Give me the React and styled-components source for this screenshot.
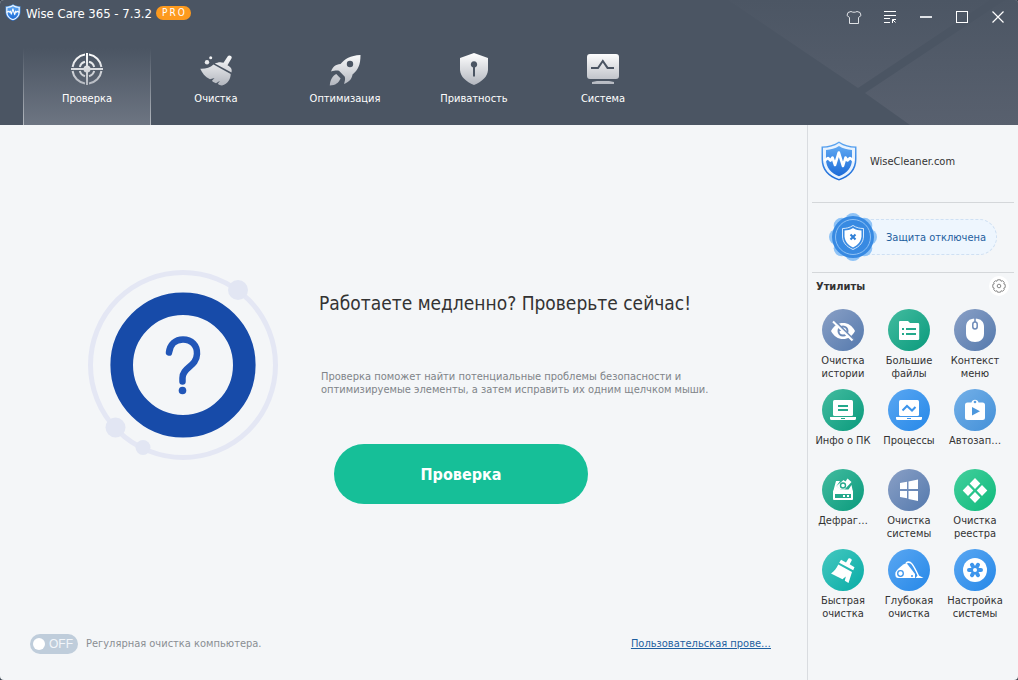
import React from "react";
import styled, { createGlobalStyle, css } from "styled-components";

const FONT = `"DejaVu Sans Condensed", "Noto Sans", sans-serif`;

const GlobalStyle = createGlobalStyle`
  *, *::before, *::after { box-sizing: border-box; }
  body { margin: 0; background: #3a4450; font-family: ${FONT}; font-size: 11px; color: #333; }
  button { font-family: inherit; border: 0; padding: 0; background: none; color: inherit; cursor: pointer; }
  h1, h2, p, ul { margin: 0; padding: 0; }
  ul { list-style: none; }
  svg { display: block; }
`;

const Window = styled.div`
  display: flex;
  flex-direction: column;
  min-height: 100vh;
  background: #f4f6f8;
  border-radius: 4px;
  overflow: hidden;
`;

const Header = styled.header`
  position: relative;
  display: flex;
  flex-direction: column;
  background: #4b5563;
  color: #fff;
`;

const Backdrop = styled.svg`
  position: absolute;
  top: 0;
  right: 0;
`;

const TitleBar = styled.div`
  position: relative;
  display: flex;
  align-items: flex-start;
  height: 48px;
  padding: 4px 12px 0 5px;
`;

const AppTitle = styled.h1`
  font-size: 13px;
  font-weight: 400;
  line-height: 20px;
  margin-left: 5px;
`;

const ProBadge = styled.span`
  height: 14px;
  margin: 2px 0 0 4px;
  padding: 0 4px 0 6px;
  border-radius: 7px;
  background: #fd9a1e;
  font-size: 10px;
  line-height: 14px;
  letter-spacing: 2px;
`;

const WindowControls = styled.div`
  display: flex;
  margin-left: auto;
  gap: 20px;
  padding-top: 5px;
`;

const ControlButton = styled.button`
  width: 16px;
  height: 16px;
`;

const Nav = styled.nav`
  position: relative;
  display: flex;
  gap: 1px;
  padding-left: 23px;
`;

const NavButton = styled.button`
  display: flex;
  flex-direction: column;
  align-items: center;
  width: 128px;
  height: 77px;
  padding-top: 3px;
  font-size: 11px;
  line-height: 16px;
  ${(p) =>
    p.$active &&
    css`
      background:
        linear-gradient(#4b5563, #b4b9c0) left / 1px 100% no-repeat,
        linear-gradient(#4b5563, #b4b9c0) right / 1px 100% no-repeat,
        linear-gradient(#4b5563, #6d7582);
    `}
`;

const NavLabel = styled.span`
  margin-top: 4px;
`;

const Body = styled.div`
  display: flex;
  flex: 1;
`;

const Main = styled.main`
  display: flex;
  flex-direction: column;
  flex: 1;
  min-width: 0;
`;

const Hero = styled.section`
  display: flex;
  flex: 1;
  gap: 41px;
  padding: 145px 20px 40px 88px;
`;

const HeroArt = styled.svg`
  flex: none;
`;

const Copy = styled.div`
  padding-top: 20px;
`;

const Headline = styled.h2`
  font-size: 19px;
  font-weight: 400;
  line-height: 26px;
  color: #333;
`;

const Description = styled.p`
  max-width: 400px;
  margin: 54px 0 0 2px;
  font-size: 11px;
  line-height: 13px;
  color: #808489;
`;

const ScanButton = styled.button`
  width: 254px;
  height: 60px;
  margin: 48px 0 0 15px;
  border-radius: 30px;
  background: #16bf98;
  color: #fff;
  font-size: 16px;
  font-weight: 700;
`;

const Footer = styled.footer`
  display: flex;
  align-items: center;
  justify-content: space-between;
  padding: 0 36px 26px 30px;
`;

const SwitchLabel = styled.label`
  display: flex;
  align-items: center;
  gap: 8px;
  line-height: 20px;
  color: #8a8e93;
  cursor: pointer;
`;

const SwitchInput = styled.input`
  position: absolute;
  opacity: 0;
  pointer-events: none;
`;

const SwitchTrack = styled.span`
  display: flex;
  align-items: center;
  gap: 4px;
  width: 48px;
  height: 20px;
  padding-left: 3px;
  border-radius: 10px;
  background: #bfcddb;
  color: #f2f6fa;
  font-family: "Liberation Sans", sans-serif;
  font-size: 12px;
  &::before {
    content: "";
    width: 12px;
    height: 12px;
    border-radius: 50%;
    background: #fff;
  }
`;

const FooterLink = styled.a`
  color: #1d5fa0;
  line-height: 20px;
`;

const Sidebar = styled.aside`
  width: 211px;
  flex: none;
  border-left: 1px solid #d9dce0;
`;

const Brand = styled.div`
  display: flex;
  align-items: center;
  gap: 13px;
  height: 78px;
  margin: 0 4px;
  padding: 0 0 5px 9px;
  border-bottom: 1px solid #d4d7da;
`;

const Protection = styled.div`
  display: flex;
  align-items: center;
  height: 70px;
  margin: 0 4px;
  padding: 0 0 1px 17px;
  border-bottom: 1px solid #d4d7da;
`;

const ProtectionButton = styled.button`
  display: flex;
  align-items: center;
  color: #1f5f9e;
  font-size: 11px;
`;

const ProtectionText = styled.span`
  height: 36px;
  margin-left: -24px;
  padding: 0 10px 0 32px;
  border: 1px dashed #cfe0f3;
  border-radius: 18px;
  background: #eef6fe;
  line-height: 35px;
`;

const SealArt = styled.svg`
  position: relative;
  z-index: 1;
`;

const UtilitiesHead = styled.div`
  display: flex;
  align-items: center;
  justify-content: space-between;
  height: 26px;
  padding: 0 9px 0 8px;
`;

const UtilitiesTitle = styled.h2`
  font-size: 11px;
  font-weight: 700;
  color: #333;
`;

const SettingsButton = styled.button`
  display: grid;
  place-items: center;
  width: 20px;
  height: 20px;
  border-radius: 50%;
  background: #fff;
`;

const ToolGrid = styled.ul`
  display: grid;
  grid-template-columns: repeat(3, 66px);
  grid-auto-rows: 80px;
  padding: 10px 0 0 2px;
`;

const ToolButton = styled.button`
  display: flex;
  flex-direction: column;
  align-items: center;
  width: 66px;
  font-size: 11px;
  line-height: 13px;
  color: #333;
`;

const ToolDisc = styled.span`
  width: 42px;
  height: 42px;
  margin-bottom: 3px;
  border-radius: 50%;
  background: linear-gradient(135deg, ${(p) => p.$from}, ${(p) => p.$to});
`;

const ToolLabel = styled.span`
  white-space: pre-line;
  text-align: center;
`;

const BrandShield = ({ width, height, id }) => (
  <svg width={width} height={height} viewBox="0 0 36 40" aria-hidden="true">
    <defs>
      <linearGradient id={id} x1="0" y1="0" x2="0" y2="1">
        <stop offset="0" stopColor="#5fa8f2" />
        <stop offset="1" stopColor="#1c6bd8" />
      </linearGradient>
    </defs>
    <path d="M18 .5C13 4 7 5.500 .5 5.500V18C.5 29 7 36 18 39.500 29 36 35.500 29 35.500 18V5.500C29 5.500 23 4 18 .5Z" fill={`url(#${id})`} />
    <path d="M18 2C13 5.500 8 6.500 2 6.800V18C2 28 8 34.500 18 38 28 34.500 34 28 34 18V6.800C28 6.500 23 5.500 18 2Z" fill="#e9f3fe" />
    <path d="M18 5C14 7.500 10 8.700 5 9V18C5 27 10 32 18 35.300 26 32 31 27 31 18V9C26 8.700 22 7.500 18 5Z" fill={`url(#${id})`} />
    <path d="M3 20L7 17 9.500 19.500 11.500 16.500 14 24 17.800 11.500 22 25 24.500 16.500 26.500 19.500 29 17 33 20" fill="none" stroke="#fff" strokeWidth="2.600" strokeLinejoin="round" />
  </svg>
);

const NavSvg = ({ id, children }) => (
  <svg width="36" height="36" viewBox="0 0 36 36" aria-hidden="true" fill={`url(#${id})`}>
    <defs>
      <linearGradient id={id} gradientUnits="userSpaceOnUse" x1="0" y1="2" x2="0" y2="34">
        <stop offset="0" stopColor="#fff" />
        <stop offset="1" stopColor="#b3b7bf" />
      </linearGradient>
    </defs>
    {children}
  </svg>
);

const navItems = [
  {
    label: "Проверка",
    icon: (
      <NavSvg id="nav-scan">
        <g fill="none" stroke="url(#nav-scan)" strokeWidth="2">
          <path d="M16 3.600A14.500 14.500 0 0 0 3.600 16M3.600 20A14.500 14.500 0 0 0 16 32.400M20 32.400A14.500 14.500 0 0 0 32.400 20M32.400 16A14.500 14.500 0 0 0 20 3.600" />
          <path d="M16 10.800A7.500 7.500 0 0 0 10.800 16M10.800 20A7.500 7.500 0 0 0 16 25.200M20 25.200A7.500 7.500 0 0 0 25.200 20M25.200 16A7.500 7.500 0 0 0 20 10.800" />
        </g>
        <rect x="17" y="2" width="2" height="32" />
        <rect x="2" y="17" width="32" height="2" />
        <circle cx="18" cy="18" r="3.500" />
      </NavSvg>
    ),
  },
  {
    label: "Очистка",
    icon: (
      <NavSvg id="nav-clean">
        <circle cx="9" cy="11.200" r="2.200" />
        <circle cx="12.700" cy="6.800" r="1.500" />
        <path d="M29.800 5.200C30.800 3.700 34.400 4.800 33.700 7L29.500 14.200C33 16 34.300 18 33.500 21.500L16.800 12.500C19.500 11.300 22.500 10.500 25.500 11.800Z" />
        <path d="M15.500 13.500L32.700 23C32.500 28.500 30 32.500 24 34.500 22 34.300 21 33.800 19.800 32.800L22 29.800 18 32.200C16.500 31.800 15 31.200 14 29.800L16.500 27 12 28.300C7 26 4 22 2.300 17.800 7.500 18 12 17 15.500 13.500Z" />
      </NavSvg>
    ),
  },
  {
    label: "Оптимизация",
    icon: (
      <NavSvg id="nav-boost">
        <path fillRule="evenodd" d="M33.500 4C23 4.500 18 8 13.500 13 8.500 13.500 6 15.500 4 20.500C7.500 19.500 10 19.300 12 19.800L17.800 25.800C18.500 28 17.800 30.500 17 33 22 31 25 28 25.500 23.500 31 19 33.500 14 33.500 4ZM23 9.800A3.200 3.200 0 1 1 23 16.200 3.200 3.200 0 1 1 23 9.800Z" />
        <path d="M9.300 23L13.600 27.500C11.500 32 8.500 34.300 2.800 34.500 3 29 5.500 25 9.300 23Z" />
      </NavSvg>
    ),
  },
  {
    label: "Приватность",
    icon: (
      <NavSvg id="nav-privacy">
        <path fillRule="evenodd" d="M18 2L32 7V19C31.500 26 26 30.500 18 34 10 30.500 4.500 26 4 19V7ZM17 25.500H19V16.500A3.200 3.200 0 1 0 17 16.500Z" />
      </NavSvg>
    ),
  },
  {
    label: "Система",
    icon: (
      <NavSvg id="nav-system">
        <path fillRule="evenodd" d="M5 3H31A3 3 0 0 1 34 6V25A3 3 0 0 1 31 28H5A3 3 0 0 1 2 25V6A3 3 0 0 1 5 3ZM6 16V18H13.500L17.800 11.800 22 18H29V16H23.200L17.800 8.200 12.500 16Z" />
        <path d="M12 30H24L29 31V33H7V31Z" />
      </NavSvg>
    ),
  },
];

const Laptop = () => (
  <>
    <rect x="11" y="11" width="20" height="16" rx="1.500" fill="#fff" />
    <path fillRule="evenodd" d="M8 28H34V29.500A1.500 1.500 0 0 1 32.500 31H9.500A1.500 1.500 0 0 1 8 29.500ZM19 29V30H23V29Z" fill="#fff" />
  </>
);

const tools = [
  {
    label: "Очистка\nистории",
    from: "#8aa0c6",
    to: "#5479ad",
    icon: (
      <>
        <path fillRule="evenodd" fill="#fff" d="M9 22C12 16.500 16 14 21 14S30 16.500 33 22C30 27.500 26 30 21 30S12 27.500 9 22ZM21 16.500A5.500 5.500 0 1 0 21 27.500 5.500 5.500 0 1 0 21 16.500Z" />
        <path fill="#fff" d="M21 18.500A3.500 3.500 0 1 1 17.500 22H21Z" />
        <path d="M13.500 12.500L32 31" stroke="#7390bb" strokeWidth="2" />
        <path d="M11 12.500L30.500 31.500" stroke="#fff" strokeWidth="2" />
      </>
    ),
  },
  {
    label: "Большие\nфайлы",
    from: "#43bca0",
    to: "#0a9a7c",
    icon: (
      <>
        <path fill="#fff" d="M12 12H20L22 14H30A1.200 1.200 0 0 1 31.200 15.200V30A1.200 1.200 0 0 1 30 31H12A1.200 1.200 0 0 1 11 30V13A1 1 0 0 1 12 12Z" />
        <path d="M14 20H16M18 20H28M14 25H16M18 25H28" stroke="#24a98c" strokeWidth="2" />
      </>
    ),
  },
  {
    label: "Контекст\nменю",
    from: "#8aa0c6",
    to: "#5479ad",
    icon: (
      <>
        <path fill="#fff" d="M21 9.500C27 9.500 30 13 30 18V24.500C30 30 26.500 33 21 33S12 30 12 24.500V18C12 13 15 9.500 21 9.500Z" />
        <path d="M21 9V13" stroke="#6d8ab8" strokeWidth="1.500" />
        <rect x="18.800" y="13" width="4.400" height="7" rx="2.200" fill="none" stroke="#6d8ab8" strokeWidth="1.500" />
      </>
    ),
  },
  {
    label: "Инфо о ПК",
    from: "#43bca0",
    to: "#0a9a7c",
    icon: (
      <>
        <Laptop />
        <path d="M16 17H26M16 21H26" stroke="#24a98c" strokeWidth="2" />
      </>
    ),
  },
  {
    label: "Процессы",
    from: "#5aa7f2",
    to: "#2688e8",
    icon: (
      <>
        <Laptop />
        <path d="M14.500 21.500L19 17 24 21.500 27.500 18" fill="none" stroke="#3d95ec" strokeWidth="2" />
      </>
    ),
  },
  {
    label: "Автозап…",
    from: "#74b0e8",
    to: "#4390d8",
    icon: (
      <>
        <path fill="#fff" d="M13.500 13.500H17.500A3.600 3.600 0 0 1 24.500 13.500H28.500A2.500 2.500 0 0 1 31 16V28.500A2.500 2.500 0 0 1 28.500 31H13.500A2.500 2.500 0 0 1 11 28.500V16A2.500 2.500 0 0 1 13.500 13.500Z" />
        <circle cx="21" cy="13" r="1.300" fill="#5a9fe0" />
        <path d="M18 18L26 22.200 18 26.500Z" fill="#4c97dd" />
      </>
    ),
  },
  {
    label: "Дефраг…",
    from: "#43bca0",
    to: "#0a9a7c",
    icon: (
      <>
        <path fill="#fff" d="M14 12H18L14.500 17 18.500 20.500H26.500L29.500 16 31 23H11Z" />
        <path fill="#fff" d="M21.500 11L23.500 12.500 25.500 9.500 29.500 13 22.500 20.500H18L14.500 17Z" />
        <circle cx="21" cy="16.500" r="2.500" fill="none" stroke="#24a98c" strokeWidth="1.400" />
        <rect x="11" y="21.500" width="20" height="9.500" rx="1" fill="#fff" />
        <path d="M13 25H29V29H13Z" fill="#24a98c" />
        <path d="M21 27H23M25 27H27" stroke="#fff" strokeWidth="2" />
      </>
    ),
  },
  {
    label: "Очистка\nсистемы",
    from: "#8aa0c6",
    to: "#5479ad",
    icon: <path fill="#fff" d="M12 14L19 12.800V20H12ZM20.500 12.400L30 10.500V20H20.500ZM12 22H19V29.200L12 28ZM20.500 22H30V32L20.500 30Z" />,
  },
  {
    label: "Очистка\nреестра",
    from: "#43cf9c",
    to: "#0fba7c",
    icon: <path fill="#fff" d="M21 9L26.300 14.500 21 20 15.700 14.500ZM14 16L19.300 21.500 14 27 8.700 21.500ZM28 16L33.300 21.500 28 27 22.700 21.500ZM21 23L26.300 28.500 21 34 15.700 28.500Z" />,
  },
  {
    label: "Быстрая\nочистка",
    from: "#45c8c0",
    to: "#08aca6",
    icon: (
      <g fill="#fff">
        <path d="M26.500 9.500C27.500 8.500 30 9.800 29.800 11.300L27.700 15.200 32.500 18.200 31.200 21.300 17.200 13.700 19 10.800 24 13.500Z" />
        <path d="M16.300 15.500L30 23 26.500 34 22.800 31.800 23.800 27.500 20.500 30.200 9 24.500C12 22.500 14.500 19.500 16.300 15.500Z" />
      </g>
    ),
  },
  {
    label: "Глубокая\nочистка",
    from: "#5aa7f2",
    to: "#2688e8",
    icon: (
      <>
        <path fill="#fff" d="M7.500 23.500C8 21 16 14.500 18.500 14L27 25V29H10C7.500 29 7 26 7.500 23.500Z" />
        <path d="M18 14C22.500 11 25 15 30.500 27" fill="none" stroke="#fff" strokeWidth="1.500" />
        <path d="M27.500 29L30 26 35.500 29Z" fill="#fff" />
        <circle cx="12.500" cy="24.500" r="2.800" fill="#fff" stroke="#3d95ec" strokeWidth="1.300" />
        <circle cx="24" cy="27" r="1" fill="#3d95ec" />
      </>
    ),
  },
  {
    label: "Настройка\nсистемы",
    from: "#5aa7f2",
    to: "#2688e8",
    icon: (
      <>
        <circle cx="21" cy="21" r="12" fill="#fff" />
        <g stroke="#3d95ec" strokeWidth="4" strokeLinecap="round">
          <path d="M15 21H27M18 15.800L24 26.200M24 15.800L18 26.200" />
        </g>
        <circle cx="21" cy="21" r="2" fill="#fff" />
      </>
    ),
  },
];

const petals = [0, 45, 90, 135, 180, 225, 270, 315];

export default function App() {
  return (
    <>
      <GlobalStyle />
      <Window>
        <Header>
          <Backdrop width="290" height="125" viewBox="0 0 290 125" aria-hidden="true">
            <defs>
              <linearGradient id="facet" gradientUnits="userSpaceOnUse" x1="0" y1="0" x2="0" y2="125">
                <stop offset="0" stopColor="#4c5664" />
                <stop offset="1" stopColor="#58606e" />
              </linearGradient>
            </defs>
            <path d="M0 0H262L130 88Z" fill="url(#facet)" />
            <path d="M290 0H277L137 93 182 125H290Z" fill="url(#facet)" />
          </Backdrop>
          <TitleBar>
            <BrandShield id="shield-small" width={16} height={17} />
            <AppTitle>Wise Care 365 - 7.3.2</AppTitle>
            <ProBadge>PRO</ProBadge>
            <WindowControls>
              <ControlButton aria-label="Темы">
                <svg width="16" height="16" viewBox="0 0 16 16" fill="none" stroke="#dfe2e6" strokeWidth="1">
                  <path d="M5 2.500C6.500 3.500 9.500 3.500 11 2.500L14 3.500 15 6.500 12.500 8.500V14.500H3.500V8.500L1 6.500 2 3.500Z" />
                </svg>
              </ControlButton>
              <ControlButton aria-label="Меню">
                <svg width="16" height="16" viewBox="0 0 16 16" fill="none" stroke="#fff" strokeWidth="1">
                  <path d="M2 2.500H14M2 6.500H14M2 9.500H8M2 13.500H8M10.500 14V10.500H14M10.500 10.500L13.500 13.500" />
                </svg>
              </ControlButton>
              <ControlButton aria-label="Свернуть">
                <svg width="16" height="16" viewBox="0 0 16 16">
                  <path d="M2 8H14" stroke="#dfe2e6" strokeWidth="2" />
                </svg>
              </ControlButton>
              <ControlButton aria-label="Развернуть">
                <svg width="16" height="16" viewBox="0 0 16 16">
                  <rect x="2.500" y="2.500" width="11" height="11" fill="none" stroke="#fff" />
                </svg>
              </ControlButton>
              <ControlButton aria-label="Закрыть">
                <svg width="16" height="16" viewBox="0 0 16 16">
                  <path d="M2.500 2.500L13.500 13.500M13.500 2.500L2.500 13.500" stroke="#fff" strokeWidth="1.200" />
                </svg>
              </ControlButton>
            </WindowControls>
          </TitleBar>
          <Nav>
            {navItems.map((item, i) => (
              <NavButton key={item.label} $active={i === 0}>
                {item.icon}
                <NavLabel>{item.label}</NavLabel>
              </NavButton>
            ))}
          </Nav>
        </Header>
        <Body>
          <Main>
            <Hero>
              <HeroArt width="190" height="190" viewBox="0 0 190 190" aria-hidden="true">
                <circle cx="95" cy="95" r="92.500" fill="none" stroke="#e4e7f4" strokeWidth="5" />
                <g fill="#e2e6f3">
                  <circle cx="150" cy="20" r="10" />
                  <circle cx="27.500" cy="157.500" r="10" />
                  <circle cx="55" cy="177.500" r="7.500" />
                </g>
                <circle cx="95" cy="95" r="61.300" fill="none" stroke="#174ba9" strokeWidth="22.600" />
                <path d="M81 82.500C82 74.500 87.500 69.500 95 69.500C103.500 69.500 109.500 75.500 109 84C108.500 97 94.500 97 94.500 108V111.500" fill="none" stroke="#2156b8" strokeWidth="6.500" strokeLinecap="round" />
                <circle cx="94.500" cy="120.500" r="3.800" fill="#2156b8" />
              </HeroArt>
              <Copy>
                <Headline>Работаете медленно? Проверьте сейчас!</Headline>
                <Description>
                  Проверка поможет найти потенциальные проблемы безопасности и оптимизируемые элементы, а затем исправить их одним щелчком мыши.
                </Description>
                <ScanButton>Проверка</ScanButton>
              </Copy>
            </Hero>
            <Footer>
              <SwitchLabel>
                <SwitchInput type="checkbox" role="switch" />
                <SwitchTrack>OFF</SwitchTrack>
                Регулярная очистка компьютера.
              </SwitchLabel>
              <FooterLink href="#profile">Пользовательская прове…</FooterLink>
            </Footer>
          </Main>
          <Sidebar>
            <Brand>
              <BrandShield id="shield-large" width={36} height={40} />
              WiseCleaner.com
            </Brand>
            <Protection>
              <ProtectionButton>
                <SealArt width="48" height="48" viewBox="0 0 48 48" aria-hidden="true">
                  <g fill="#8fc3f6">
                    {petals.map((a) => (
                      <circle key={a} cx="24" cy="8" r="8" transform={`rotate(${a} 24 24)`} />
                    ))}
                  </g>
                  <circle cx="24" cy="24" r="21" fill="#388ae2" />
                  <circle cx="24" cy="24" r="17.500" fill="none" stroke="#8fc1f4" strokeWidth="1" />
                  <path d="M24 12.500C20.500 14.800 17 15.500 13.500 15.500V23C13.500 29 17 33.500 24 36.500 31 33.500 34.500 29 34.500 23V15.500C31 15.500 27.500 14.800 24 12.500Z" fill="none" stroke="#d5e8fc" strokeWidth="1" />
                  <path d="M24 15C21 17 18.500 17.300 15.500 17.500V23.500C16 28.500 19 32 24 34.500 29 32 32 28.500 32.500 23.500V17.500C29.500 17.300 27 17 24 15Z" fill="#fff" />
                  <path d="M21.500 21.500L26.500 26.500M26.500 21.500L21.500 26.500" stroke="#2f7fd6" strokeWidth="2" />
                </SealArt>
                <ProtectionText>Защита отключена</ProtectionText>
              </ProtectionButton>
            </Protection>
            <UtilitiesHead>
              <UtilitiesTitle>Утилиты</UtilitiesTitle>
              <SettingsButton aria-label="Настройки утилит">
                <svg width="14" height="14" viewBox="0 0 14 14" fill="none" stroke="#888" strokeWidth="1">
                  <path d="M5.500 .8H8.500L9 2.200 10.700 1.800 12.300 3.400 11.800 5 13.200 5.500V8.500L11.800 9 12.300 10.600 10.700 12.200 9 11.800 8.500 13.200H5.500L5 11.800 3.300 12.200 1.700 10.600 2.200 9 .8 8.500V5.500L2.200 5 1.700 3.400 3.300 1.800 5 2.200Z" />
                  <circle cx="7" cy="7" r="1.800" />
                </svg>
              </SettingsButton>
            </UtilitiesHead>
            <ToolGrid>
              {tools.map((t) => (
                <li key={t.label}>
                  <ToolButton>
                    <ToolDisc $from={t.from} $to={t.to}>
                      <svg width="42" height="42" viewBox="0 0 42 42" aria-hidden="true">
                        {t.icon}
                      </svg>
                    </ToolDisc>
                    <ToolLabel>{t.label}</ToolLabel>
                  </ToolButton>
                </li>
              ))}
            </ToolGrid>
          </Sidebar>
        </Body>
      </Window>
    </>
  );
}
